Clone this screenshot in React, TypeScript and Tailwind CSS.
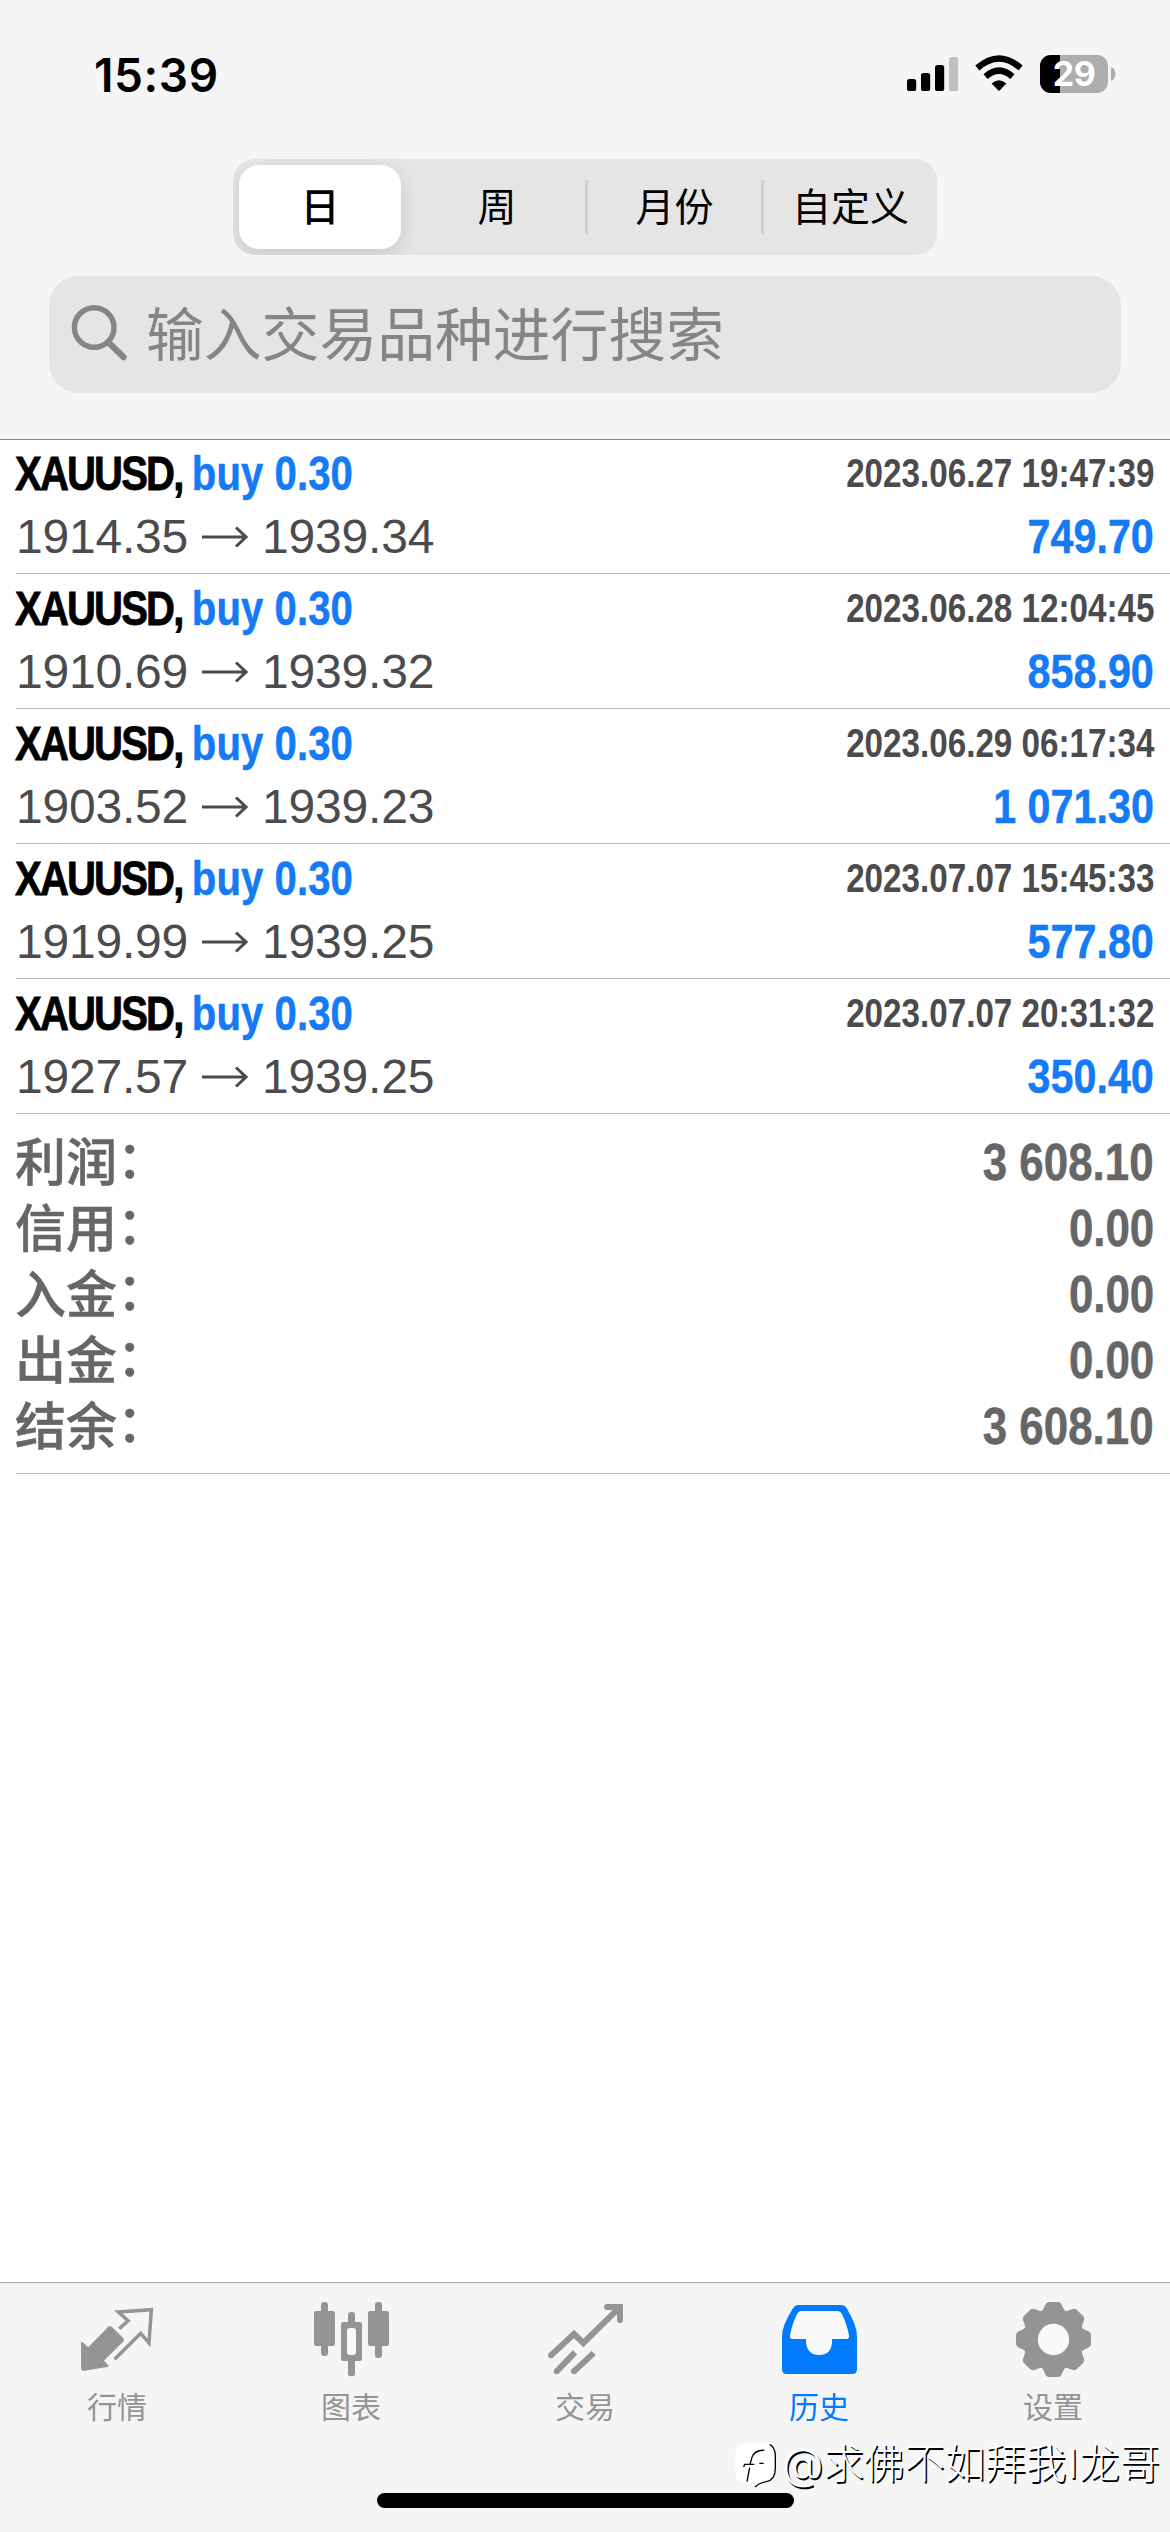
import React from 'react';

const deals = [
  { open: '1914.35', close: '1939.34', time: '2023.06.27 19:47:39', profit: '749.70' },
  { open: '1910.69', close: '1939.32', time: '2023.06.28 12:04:45', profit: '858.90' },
  { open: '1903.52', close: '1939.23', time: '2023.06.29 06:17:34', profit: '1 071.30' },
  { open: '1919.99', close: '1939.25', time: '2023.07.07 15:45:33', profit: '577.80' },
  { open: '1927.57', close: '1939.25', time: '2023.07.07 20:31:32', profit: '350.40' },
];

const totals = [
  ['利润', '3 608.10'],
  ['信用', '0.00'],
  ['入金', '0.00'],
  ['出金', '0.00'],
  ['结余', '3 608.10'],
];

function StatusBar() {
  return (
    <div className="flex h-[159px] items-start justify-between pl-[94px] pr-[54px]">
      <div className="mt-[47px] text-[46px] font-semibold leading-[56px] tracking-[0.6px] text-black">15:39</div>
      <div className="mt-[55px] flex items-start">
        <svg width="52" height="38" viewBox="0 0 52 38" className="mr-[16px]">
          <rect x="0" y="24" width="9.2" height="12" rx="2.6" />
          <rect x="14" y="18" width="9.2" height="18" rx="2.6" />
          <rect x="28" y="10" width="9.2" height="26" rx="2.6" />
          <rect x="42" y="2" width="9.2" height="34" rx="2.6" fill="#c0c0c0" />
        </svg>
        <svg width="48" height="38" viewBox="0 0 48 38" className="mr-[17px]">
          <path d="M24 35.6 L17.2 28.6 Q24 23 30.8 28.6 Z" stroke="#000" strokeWidth="1" strokeLinejoin="round" />
          <path d="M10.6 21.6 Q24 9.8 37.4 21.6" fill="none" stroke="#000" strokeWidth="6.4" />
          <path d="M2.4 13 Q24 -6 45.6 13" fill="none" stroke="#000" strokeWidth="6.4" />
        </svg>
        <div className="relative flex h-[38px] w-[68px] items-center justify-center rounded-[11px] bg-[#adadad]">
          <div className="absolute inset-y-0 left-0 w-[20px] rounded-l-[11px] bg-black" />
          <span className="relative text-[34px] font-bold leading-[36px] tracking-[-0.5px] text-white">29</span>
        </div>
        <svg width="5" height="14" viewBox="0 0 5 14" className="ml-[3px] mt-[12px]">
          <path d="M0 0 Q4.4 2 4.4 7 Q4.4 12 0 14 Z" fill="#adadad" />
        </svg>
      </div>
    </div>
  );
}

function Segments() {
  return (
    <div className="mx-auto grid h-[96px] w-[704px] grid-cols-4 items-center overflow-hidden rounded-[22px] bg-[#e5e5e5] text-[39px] leading-[84px] text-black">
      <div className="ml-[6px] mr-[8px] h-[84px] rounded-[20px] bg-white text-center font-medium shadow-[0_6px_18px_rgba(0,0,0,0.12)]">日</div>
      <div className="text-center">周</div>
      <div className="flex items-center">
        <div className="h-[54px] w-[3px] bg-[#cfcfcf]" />
        <div className="flex-1 text-center">月份</div>
      </div>
      <div className="flex items-center">
        <div className="h-[54px] w-[3px] bg-[#cfcfcf]" />
        <div className="flex-1 text-center">自定义</div>
      </div>
    </div>
  );
}

function SearchField() {
  return (
    <div className="mx-[49px] mt-[21px] flex h-[117px] items-center rounded-[30px] bg-[#e5e5e7] pl-[22px] text-[#858587]">
      <svg width="58" height="58" viewBox="0 0 58 58" fill="none" stroke="currentColor" strokeWidth="5.4" strokeLinecap="round" className="mb-[6px]">
        <circle cx="23.2" cy="24.5" r="19.8" />
        <path d="M37.5 39.5 L52.5 54" strokeWidth="6.4" />
      </svg>
      <div className="ml-[17px] text-[57.8px] leading-[80px]">输入交易品种进行搜索</div>
    </div>
  );
}

function DealRow({ deal }: { deal: (typeof deals)[number] }) {
  return (
    <div className="mb-px ml-[16px] h-[134px] border-b border-[#b9b9bb] pr-[16px]">
      <div className="flex h-[67px] items-center justify-between whitespace-pre font-['Liberation_Sans',sans-serif]">
        <div className="-ml-px origin-left scale-x-[0.835] text-[48px] font-bold leading-[67px]">
          <span className="tracking-[-2.2px] text-black [-webkit-text-stroke:0.8px_#000]">XAUUSD, </span>
          <span className="tracking-[0.1px] text-[#147af5] [-webkit-text-stroke:0.5px_#147af5]">buy 0.30</span>
        </div>
        <div className="origin-right scale-x-[0.83] text-[40px] font-bold leading-[67px] text-[#4b4b4d]">{deal.time}</div>
      </div>
      <div className="flex h-[60px] items-center justify-between whitespace-pre font-['Liberation_Sans',sans-serif]">
        <div className="flex items-center text-[48px] leading-[60px] tracking-[-0.2px] text-[#4b4b4d]">
          <span>{deal.open}</span>
          <svg width="46" height="22" viewBox="0 0 46 22" fill="none" stroke="currentColor" strokeWidth="3" className="mb-px ml-[14px] mr-[14px]">
            <path d="M0 11 H44 M34 1.5 L44 11 L34 20.5" />
          </svg>
          <span>{deal.close}</span>
        </div>
        <div className="origin-right scale-x-[0.86] text-[48px] font-bold leading-[60px] text-[#147af5] [-webkit-text-stroke:0.5px_#147af5]">{deal.profit}</div>
      </div>
    </div>
  );
}

const toothAngles = [0, 45, 90, 135, 180, 225, 270, 315];

const tabs = [
  {
    label: '行情',
    icon: (
      <svg width="75" height="75" viewBox="237 126 225 225" fill="currentColor">
        <path d="M240 246 L245 247 L262 262 L321 201 Q327 195 333 201 L366 233 Q372 239 366 245 L309 302 L323 317 Q324 320 319 321 L250 332 Q240 333 240 325 Z" />
        <path d="M355 206 L381 182 L352 156 L451 149 L444 249 L419 220 L341 298" fill="none" stroke="currentColor" strokeWidth="10.5" />
      </svg>
    ),
  },
  {
    label: '图表',
    icon: (
      <svg width="75" height="75" viewBox="939 126 225 225" fill="currentColor">
        <rect x="960" y="126" width="21" height="162" rx="9" />
        <rect x="939" y="153" width="63" height="105" rx="7" />
        <rect x="1122" y="126" width="21" height="168" rx="9" />
        <rect x="1101" y="153" width="63" height="105" rx="7" />
        <rect x="1041" y="156" width="21" height="50" rx="9" />
        <rect x="1041" y="290" width="21" height="59" rx="9" />
        <rect x="1020" y="186" width="63" height="117" rx="7" />
        <rect x="1038" y="204" width="27" height="81" rx="9" fill="#f8f8f8" />
      </svg>
    ),
  },
  {
    label: '交易',
    icon: (
      <svg width="75" height="75" viewBox="441 126 225 225" fill="none" stroke="currentColor" strokeWidth="18">
        <path d="M450 286 L519 222 L547 249 L652 146" />
        <circle cx="450" cy="286" r="9" fill="currentColor" stroke="none" />
        <path d="M618 141 H657 V180" strokeLinecap="round" strokeLinejoin="round" />
        <path d="M638 141 H657 V160 Z" />
        <path d="M467 334 L522 277" />
        <circle cx="467" cy="334" r="9" fill="currentColor" stroke="none" />
        <path d="M519 334 L578 279" />
        <circle cx="519" cy="334" r="9" fill="currentColor" stroke="none" />
      </svg>
    ),
  },
  {
    label: '历史',
    active: true,
    icon: (
      <svg width="75" height="75" viewBox="183 126 225 225" fill="currentColor">
        <path d="M232 135 H361 Q371 135 377 145 Q408 196 408 230 V328 Q408 342 394 342 H197 Q183 342 183 328 V230 Q183 196 216 145 Q222 135 232 135 Z" />
        <path d="M242 153 H349 Q358 153 363 163 Q377 190 384 226 Q386 237 376 237 H333 V247 Q331 285 294 285 Q259 285 255 247 V237 H215 Q205 237 207 226 Q214 190 228 163 Q233 153 242 153 Z" fill="#f9f9f9" />
      </svg>
    ),
  },
  {
    label: '设置',
    icon: (
      <svg width="75" height="75" viewBox="-112.5 -112.5 225 225" fill="currentColor">
        <circle r="88" />
        {toothAngles.map((a) => (
          <path key={a} transform={`rotate(${a})`} d="M-42 -80 Q-32 -85 -26 -101 Q-22 -112.5 -13 -112.5 H13 Q22 -112.5 26 -101 Q32 -85 42 -80 Z" />
        ))}
        <circle r="47" fill="#f9f9f9" />
      </svg>
    ),
  },
];

function TabBar() {
  return (
    <div className="relative h-[250px] border-t border-[#a9a9a9] bg-[#f5f5f5]">
      <div className="grid grid-cols-5 pt-[19px]">
        {tabs.map((t) => (
          <div key={t.label} className={`flex flex-col items-center ${t.active ? 'text-[#007aff]' : 'text-[#949494]'}`}>
            {t.icon}
            <div className="mt-[8px] text-[30px] leading-[44px]">{t.label}</div>
          </div>
        ))}
      </div>
      <div className="absolute bottom-[24px] left-[377px] h-[15px] w-[417px] rounded-full bg-black" />
      <div className="absolute right-[10px] top-[151px] flex items-center whitespace-pre text-[40.5px] font-light leading-[60px] text-white">
        <svg width="42" height="46" viewBox="-18 78 126 138" className="mr-[5px] mt-[2px]">
          <path d="M20 80 H70 Q104 80 104 114 V152 Q104 192 78 196 Q56 198 42 213 L46 200 H16 Q-17 200 -17 166 V114 Q-17 80 20 80 Z" fill="#fff" />
          <path d="M86 85 Q103 94 103 120 V156 Q103 192 76 197 Q54 200 42 213" fill="none" stroke="#000" strokeWidth="4" />
          <path d="M70 103 Q42 101 33 124 L27 145 M8 153 L11 145 H40 M55 142 H68 M26 155 L18 197" fill="none" stroke="#000" strokeWidth="4" />
        </svg>
        <span className="text-[42.5px] [text-shadow:1.5px_1.5px_0_#000]">@</span>
        <span className="[text-shadow:1.5px_1.5px_0_#000]">求佛不如拜我<span className="mx-px">I</span>龙哥</span>
      </div>
    </div>
  );
}

export default function App() {
  return (
    <div className="flex h-[2532px] w-[1170px] flex-col overflow-hidden bg-white font-['Inter','Noto_Sans_CJK_SC',sans-serif]">
      <div className="h-[440px] border-b border-[#868688] bg-[#f5f5f5]">
        <StatusBar />
        <Segments />
        <SearchField />
      </div>
      <div>
        {deals.map((d) => (
          <DealRow key={d.time} deal={d} />
        ))}
      </div>
      <div className="ml-[16px] h-[359px] border-b border-[#b9b9bb] pr-[16px] pt-[15px] text-[#666]">
        {totals.map(([name, value]) => (
          <div key={name} className="flex h-[66px] items-center justify-between whitespace-pre">
            <span className="-ml-px text-[51px] font-medium leading-[66px] [-webkit-text-stroke:0.5px_#666]">
              {name}
              <span className="relative -top-[3px]">：</span>
            </span>
            <span className="origin-right scale-x-[0.86] font-['Liberation_Sans',sans-serif] text-[51px] font-bold leading-[66px] [-webkit-text-stroke:0.5px_#666]">{value}</span>
          </div>
        ))}
      </div>
      <div className="flex-1" />
      <TabBar />
    </div>
  );
}
